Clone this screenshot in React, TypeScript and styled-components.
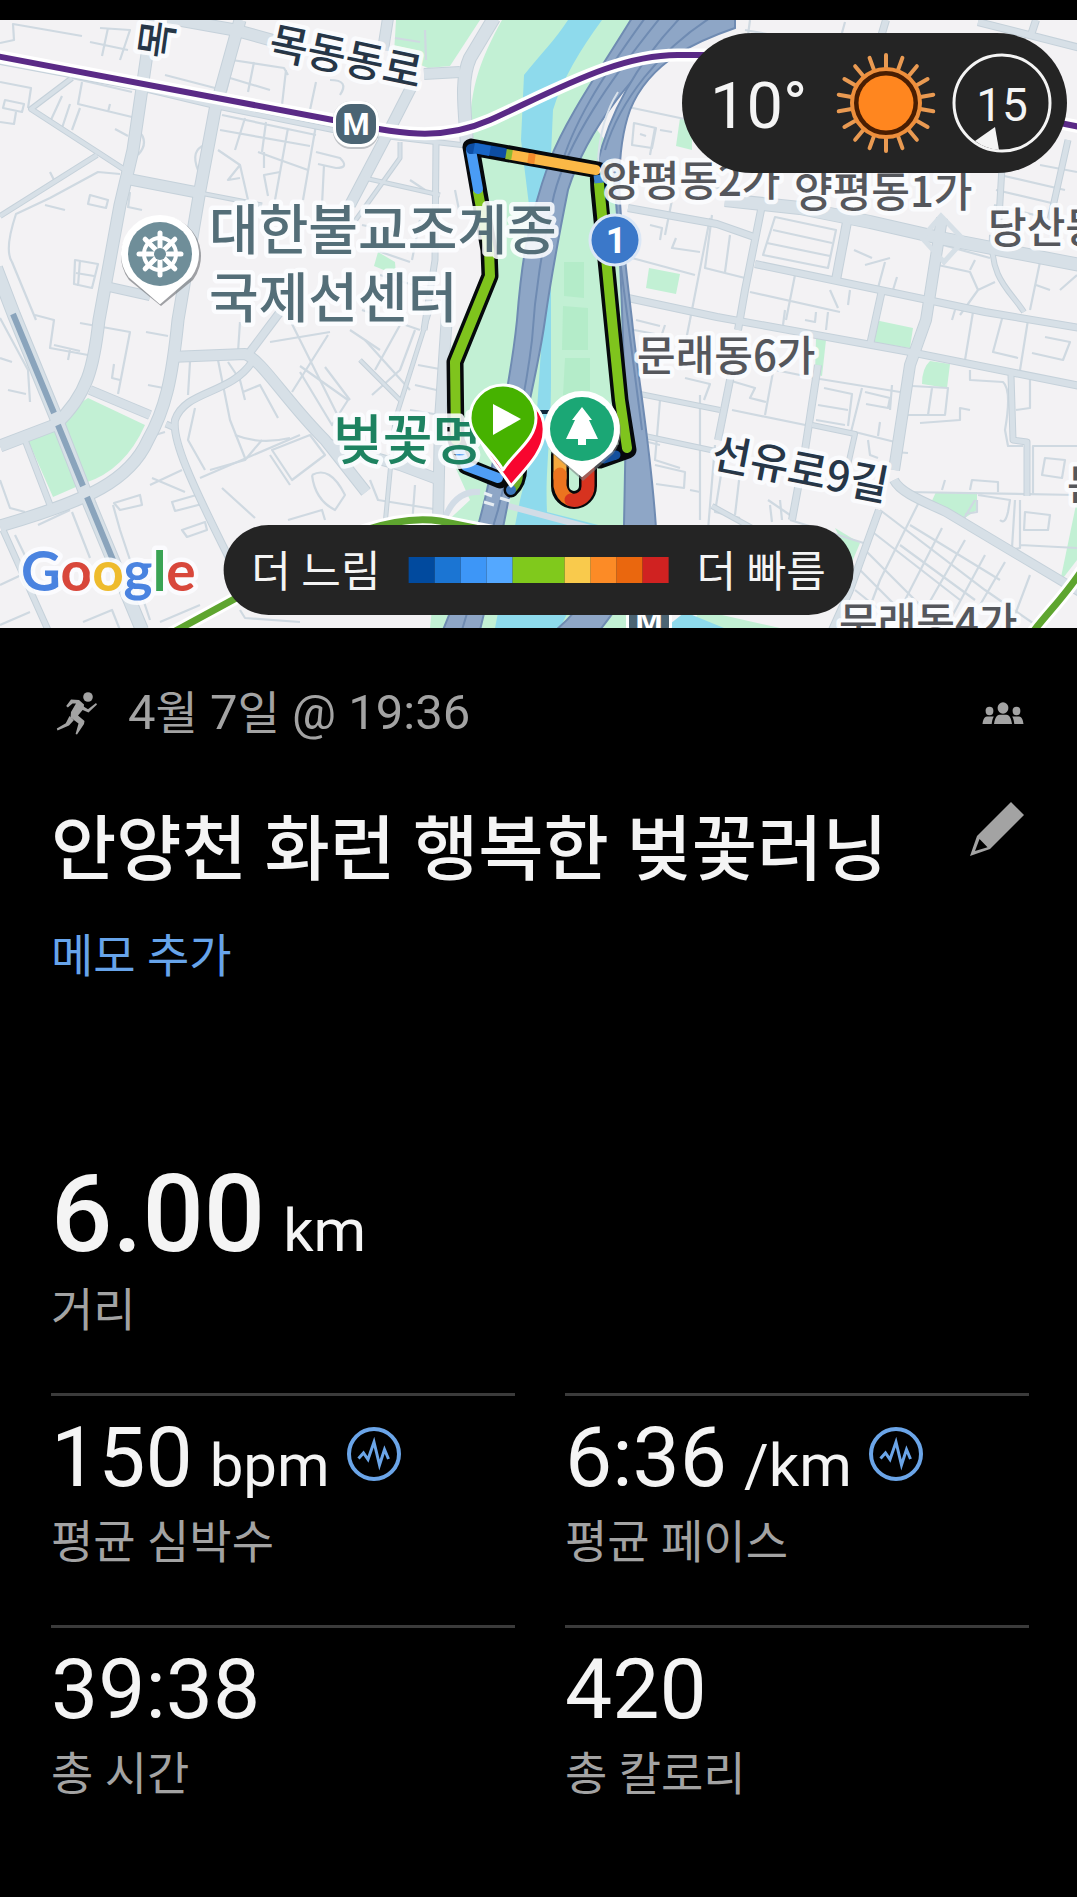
import React from "react";
import styled, { createGlobalStyle } from "styled-components";

const GlobalStyle = createGlobalStyle`
  * { box-sizing: border-box; }
  html, body { margin: 0; background: #000; }
  body {
    font-family: Roboto, "Noto Sans CJK KR", sans-serif;
    color: #f4f4f4;
  }
  button {
    margin: 0;
    padding: 0;
    border: 0;
    background: none;
    font: inherit;
    color: inherit;
    cursor: pointer;
  }
`;

const Page = styled.main`
  min-height: 100vh;
  padding-top: 20px;
  background: #000;
`;

/* ---------- map ---------- */

const MapPanel = styled.section`
  position: relative;
  overflow: hidden;
  background: #f3f2f4;
`;

const MapCanvas = styled.svg`
  display: block;
  width: 100%;
  height: auto;
`;

const WeatherPill = styled.div`
  position: absolute;
  top: 13px;
  right: 10px;
  width: 385px;
  height: 140px;
  padding: 0 15px 0 28px;
  display: flex;
  align-items: center;
  gap: 16px;
  border-radius: 70px;
  background: #242424;
`;

const Temperature = styled.span`
  flex: 1;
  padding-top: 6px;
  font-size: 65px;
  line-height: 72px;
`;

const LegendPill = styled.div`
  position: absolute;
  bottom: 13px;
  left: 50%;
  transform: translateX(-50%);
  height: 90px;
  padding: 0 28px;
  display: flex;
  align-items: center;
  gap: 28px;
  border-radius: 45px;
  background: #242424;
  white-space: nowrap;
`;

const LegendText = styled.span`
  padding-top: 4px;
  font-size: 43px;
  line-height: 56px;
`;

const LegendScale = styled.div`
  display: flex;
`;

const LegendStep = styled.span<{ $color: string; $span: number }>`
  width: ${(p) => p.$span * 26}px;
  height: 26px;
  background: ${(p) => p.$color};
`;

/* ---------- summary ---------- */

const Summary = styled.section`
  padding: 55px 48px 55px 51px;
`;

const MetaRow = styled.header`
  display: flex;
  align-items: center;
  padding: 0 5px;
  color: #a3a3a3;
`;

const ActivityDate = styled.time`
  flex: 1;
  margin-left: 30px;
  font-size: 49px;
  line-height: 60px;
`;

const Hangul = styled.span`
  font-size: 46px;
`;

const TitleRow = styled.div`
  display: flex;
  align-items: flex-start;
  justify-content: space-between;
  margin-top: 65px;
  padding-right: 5px;
`;

const Title = styled.h1`
  margin: 0;
  font-size: 71px;
  font-weight: 500;
  line-height: 84px;
`;

const EditButton = styled.button`
  display: flex;
  margin-top: -7px;
  color: #a3a3a3;
`;

const MemoButton = styled.button`
  display: block;
  margin-top: 36px;
  font-size: 46px;
  line-height: 56px;
  color: #67a4ea;
`;

const Hero = styled.div`
  margin-top: 170px;
`;

const HeroValue = styled.div`
  display: flex;
  align-items: baseline;
  gap: 18px;
  font-size: 108px;
  font-weight: 500;
  line-height: 120px;
`;

const StatGrid = styled.div`
  display: grid;
  grid-template-columns: 1fr 1fr;
  gap: 55px 50px;
  margin-top: 55px;
`;

const Stat = styled.div`
  padding-top: 14px;
  border-top: 3px solid #3b3b3b;
`;

const StatValue = styled.div`
  display: flex;
  align-items: baseline;
  gap: 17px;
  font-size: 84px;
  line-height: 96px;
`;

const Unit = styled.span`
  font-size: 60px;
  font-weight: 400;
  line-height: 60px;
`;

const Caption = styled.div`
  margin-top: 8px;
  font-size: 46px;
  line-height: 56px;
  color: #a3a3a3;
`;

const ChartButton = styled.button`
  display: flex;
  align-self: flex-start;
  margin-top: 17px;
`;

/* ---------- icons ---------- */

const RunnerIcon = () => (
  <svg width="42" height="43" viewBox="0 0 42 43" fill="currentColor" aria-hidden="true">
    <circle cx="32" cy="5" r="4.8" />
    <path d="M15 7.500 L23 8 L28 12.500 L27.500 17 L22 23.500 L28.500 29 L28 32 L21 42.500 L19.600 42 L22.500 31.500 L14.500 25.500 L15 20 L20 11.500 L16.500 11.500 L11.800 15.500 L10.200 14 Z" />
    <path d="M26 13.500 L32 17.300 L40 11 L41 12.600 L32.500 20.500 L25.500 17.500 Z" />
    <path d="M13.500 24 L17.800 28.200 L13 33.500 L1.500 38.500 L0.800 36.500 L9.800 31.200 Z" />
  </svg>
);

const GroupIcon = () => (
  <svg width="42" height="24" viewBox="0 0 42 24" fill="currentColor" role="img" aria-label="공개 범위">
    <ellipse cx="21" cy="7" rx="5.400" ry="5.800" />
    <path d="M12 23 C13 17 14.500 14 17.500 13.800 H24.500 C27.500 14 29 17 30 23 Z" />
    <ellipse cx="7.500" cy="10" rx="3.900" ry="4.200" />
    <path d="M0.500 23 C1 19 2 15.600 5 15.400 H11.800 C10.500 17.500 10 20 9.700 23 Z" />
    <ellipse cx="34.500" cy="10" rx="3.900" ry="4.200" />
    <path d="M41.500 23 C41 19 40 15.600 37 15.400 H30.200 C31.500 17.500 32 20 32.300 23 Z" />
  </svg>
);

const PencilIcon = () => (
  <svg width="54" height="55" viewBox="0 0 54 55" fill="currentColor" aria-hidden="true">
    <path fillRule="evenodd" d="M41 1 L54 14 L20 48 L0 55 L7 35 Z M9.500 38 L5 50 L17.500 46.200 Z" />
  </svg>
);

const ChartIcon = () => (
  <svg width="54" height="54" viewBox="0 0 54 54" fill="none" stroke="#6ba5e8" aria-hidden="true">
    <circle cx="27" cy="27" r="25" strokeWidth="4" />
    <path d="M11.500 31.500 L16.500 26 L21 32.500 L27 15 L32.500 38 L37.500 22.500 L41.500 32" strokeWidth="3" />
  </svg>
);

const SunIcon = () => (
  <svg width="100" height="100" viewBox="-50 -50 100 100" role="img" aria-label="맑음">
    {Array.from({ length: 18 }, (_, i) => (
      <line key={i} y1="-35" y2="-48" stroke="#e99a52" strokeWidth="4" strokeLinecap="round" transform={`rotate(${i * 20})`} />
    ))}
    <circle r="34" fill="#4a1e02" stroke="#ee8f3c" strokeWidth="4" />
    <circle r="27.500" fill="#ff861f" />
  </svg>
);

const WindIcon = () => (
  <svg width="100" height="100" viewBox="-50 -50 100 100" role="img" aria-label="바람 15">
    <circle r="48" fill="none" stroke="#f4f4f4" strokeWidth="3" />
    <path d="M-7 24 L-27 38 A47 47 0 0 0 -3 47 Z" fill="#f4f4f4" />
    <text y="18" fontSize="46" textAnchor="middle" fill="#f4f4f4">15</text>
  </svg>
);

/* ---------- map drawing ---------- */

const roads: { w: number; d: string }[] = [
  { w: 13, d: "M152 20 L133 150 L120 205 L99 320 C94 365 88 395 55 425 L0 446" },
  { w: 13, d: "M240 20 L215 110 L200 190 L178 320 C172 380 165 410 148 440 C130 480 90 500 0 526" },
  { w: 6, d: "M0 62 L140 88 L215 106 L333 130 L470 146" },
  { w: 13, d: "M168 18 L235 30 L300 48" },
  { w: 12, d: "M128 179 L200 193" },
  { w: 5, d: "M200 193 L262 205" },
  { w: 6, d: "M0 216 L97 155" },
  { w: 6, d: "M72 78 L31 109 L125 170" },
  { w: 10, d: "M105 286 L150 296" },
  { w: 14, d: "M-4 268 L14 315 L55 415 L90 505 L142 630" },
  { w: 7, d: "M25 440 L50 505 M3 530 L48 630" },
  { w: 10, d: "M90 390 L150 415" },
  { w: 12, d: "M170 357 L245 354 C262 360 285 400 325 440 L366 492" },
  { w: 9, d: "M250 352 L280 312" },
  { w: 8, d: "M252 362 C230 395 185 390 175 420 C172 440 190 480 228 556 L236 580" },
  { w: 7, d: "M166 424 L175 428" },
  { w: 14, d: "M494 18 L470 58 C460 80 465 110 467 146" },
  { w: 12, d: "M388 18 L383 50 M424 74 L460 72 M416 78 L392 125 L350 205" },
  { w: 7, d: "M436 142 L435 260 L424 330" },
  { w: 5, d: "M360 177 L440 195 M400 142 L400 158 L350 228" },
  { w: 12, d: "M330 445 L400 465 L440 480" },
  { w: 12, d: "M448 300 L440 420 L438 525" },
  { w: 5, d: "M430 310 L395 420 L385 525 M360 360 L400 400" },
  { w: 14, d: "M725 200 L800 208 L870 222 L940 238 L1080 265" },
  { w: 12, d: "M942 218 L926 320 L910 365 L894 470" },
  { w: 10, d: "M894 480 C900 492 920 500 946 512 L1080 592" },
  { w: 8, d: "M628 298 L717 317 L910 352 L1080 386" },
  { w: 8, d: "M762 205 L745 290 L738 330" },
  { w: 8, d: "M628 208 L717 224 L757 238" },
  { w: 10, d: "M847 222 L836 280" },
  { w: 8, d: "M755 264 L880 290 L985 312 L1080 328" },
  { w: 8, d: "M882 290 L870 345" },
  { w: 8, d: "M818 365 L805 450 L792 520" },
  { w: 8, d: "M732 370 L718 440" },
  { w: 6, d: "M812 425 L855 434 L848 465" },
  { w: 7, d: "M1011 375 L1013 440 L1027 442 L1027 496" },
  { w: 8, d: "M879 510 L850 590 L832 630" },
  { w: 6, d: "M992 235 C990 280 1010 290 1024 312" },
  { w: 8, d: "M1036 20 L1030 38 M978 22 L1080 48 M886 20 L880 40" },
  { w: 7, d: "M1003 150 L998 235 M1068 140 L1050 220" },
  { w: 6, d: "M635 393 L720 410 M640 435 L720 452 M712 506 L752 528" },
];

const lanes = [
  "M0 43 L14 40 L13 24 L82 36 M100 28 L130 30 L120 60 M90 42 L128 50 M108 28 L102 56",
  "M0 82 L31 88 L28 108 M5 100 L24 104 L22 112 L3 108 Z M0 122 L14 124 L16 112",
  "M72 78 L132 92 M82 82 L78 104 L132 117 M62 96 L50 122 M70 104 L62 128 M80 108 L72 130 M110 104 L108 112",
  "M138 130 Q150 142 138 155 M205 145 Q190 150 198 170 M50 172 L54 180 M115 129 L128 136",
  "M120 174 L98 172 L50 198 L16 214 Q4 250 12 262 L36 320 M90 195 L108 200 L106 208 L88 204 Z M45 205 L65 210",
  "M130 192 L128 208 M128 207 L142 210 M75 260 L98 264 L92 288 L74 284 Z M80 260 L78 286 M76 273 L94 276",
  "M165 75 L215 88 M232 60 L284 68 L288 75 M230 78 L270 90 M232 68 L226 92 M254 62 L248 92 M286 70 L282 105",
  "M222 115 L316 135 M220 130 L310 146 M245 118 L235 150 M266 122 L262 152 M288 128 L275 200 M316 125 L303 200",
  "M218 150 L240 165 L248 200 M258 152 L280 160 L308 170 M264 152 L264 168 M240 165 L228 180 L240 178 M268 196 L264 175 L280 172",
  "M316 152 L340 158 Q350 168 336 168 L318 164 M324 165 L322 205 M330 80 Q350 80 340 95 M316 82 L310 110",
  "M0 318 L28 370 L30 402 M0 358 L12 362 M8 390 L26 394 M35 315 L54 320 L50 348 L88 355 M54 345 L80 351 M70 350 L68 360",
  "M80 323 L130 332 L118 394 M114 364 L112 378 L120 380 M146 332 L168 336 M148 385 L174 390",
  "M190 362 L188 395 M218 360 L230 420 L245 458 M228 362 L240 380 L245 400 M243 392 L260 385 L278 418 M195 408 L188 440 L205 470",
  "M200 478 L300 435 M235 435 Q260 445 290 438 M240 322 L238 352 M270 342 L330 332 M290 320 L310 360 L340 420 M328 335 L292 392",
  "M300 366 L348 400 L332 425 L300 372 M325 367 L350 400 M350 330 L380 350 M270 455 L290 485 M222 488 L255 518 M210 470 L245 460 L262 440",
  "M272 450 L292 480 L325 455 L310 435 Z M312 475 Q330 465 345 495 L335 510 Q315 500 312 475",
  "M145 438 L165 432 M150 485 L182 470 M152 478 L185 492 M114 503 L140 495 L142 505 L120 510 Z M172 502 L200 494 L202 504 L175 511 Z M182 530 L205 522 L207 530 L187 537 Z",
  "M113 505 L120 530 L150 620 M15 535 L32 570 L0 585 M72 512 L90 558 M38 525 L70 510 M0 480 L10 508 L25 512 M0 625 L30 612",
  "M83 622 L112 610 L120 630 M160 622 L200 605 M240 610 L245 618 L300 622 M288 520 L322 510 L325 520 M245 540 L225 555",
  "M362 225 L395 232 M375 250 L410 262 M380 275 L430 290 M362 310 L420 330 M400 325 L375 370 M365 340 L410 390 M372 395 L400 370 L415 330",
  "M410 180 L425 190 M415 212 L436 218 M455 190 L460 215 M420 220 L412 260 M440 225 L455 228 M418 365 L445 370 M415 385 L445 392 M410 410 L440 415",
  "M395 38 L420 42 M425 30 L426 60 M370 480 L378 500 L440 510 M415 485 L412 525",
  "M628 107 L680 118 M634 123 L656 128 L652 148 L632 145 Z M640 134 L646 136 M660 130 L672 132 M655 128 L650 155",
  "M672 200 L665 235 M650 225 L662 228 L660 240 M710 218 L690 320 M628 232 L640 234 M632 258 L695 275 M676 238 L672 248 L700 252",
  "M636 320 L660 326 M634 330 L655 334 M690 320 L680 370 M665 325 L660 340 M685 378 L710 384 L704 400 M640 440 L660 445 M655 465 L685 472 L684 488 L656 484",
  "M690 490 L700 492 M636 370 L665 372 M700 395 L700 520 M715 445 L708 530 M660 400 L655 460 L680 468 M725 450 L715 512 L740 518 M742 455 L735 515",
  "M775 217 L836 230 L828 268 L763 255 Z M773 230 L832 243 M767 243 L830 256 M712 215 L705 268 L745 278 M730 235 L725 272",
  "M854 250 L872 258 M865 265 L890 258 M885 262 L878 288 M897 277 L893 290 M750 292 L840 312 M795 275 L786 320 M830 290 L838 308 M850 290 L848 305",
  "M943 245 L990 258 M938 265 L970 272 L978 290 L960 315 M978 290 L995 282 M970 270 L975 260 M1040 262 L1030 310 M1036 285 L1050 290 M1077 275 L1060 290",
  "M1000 175 L1065 190 M996 190 L1060 205 M994 205 L1055 220 M1020 155 L1018 170 M1040 165 L1077 172",
  "M785 310 L783 325 M828 312 L826 330 M805 320 L815 322 L816 312 M955 310 L952 320 M973 312 L965 360 M1003 315 L993 352 L1018 358 M1028 320 L1020 370",
  "M1045 337 L1070 342 L1063 360 L1032 353 M970 370 L970 380 L1003 382 Q1012 390 1005 430 L1008 446 L1023 446 M1030 380 L1030 408 L1016 410",
  "M760 367 L820 379 L900 392 M773 372 L765 415 M728 380 L755 388 L750 398 L766 402 M732 410 L820 428 M824 388 L852 394 L848 426 M818 405 L848 410 M816 420 L845 425",
  "M862 388 L850 436 M865 392 L890 398 L888 408 L866 404 M892 385 L890 410 M855 432 L895 442 M880 422 L878 436 M868 440 L870 455 L878 458",
  "M912 386 L948 388 L945 415 L905 415 M932 388 L928 415 M920 423 L960 420 L960 408 L970 410 M895 452 L908 453",
  "M905 492 L1077 495 M970 490 L972 480 L998 482 L998 492 M945 480 L942 490 M978 495 L1010 500 L1008 512 Q1005 525 1000 520 M1033 495 L1033 446 L1077 446 M1045 458 L1065 460 L1062 478 L1042 475 Z",
  "M1020 500 L1020 548 L1010 550 M1015 500 L1012 548 M1025 512 L1050 515 L1048 530 L1024 530 Z M1020 545 L1077 548 M960 525 L975 500 M977 500 L977 512 L965 514",
  "M880 510 L985 590 L1040 628 M870 530 L960 600 M865 550 L925 610 M860 570 L900 610 M855 590 L880 610 M920 500 L880 580 L868 612",
  "M942 528 L905 600 M965 540 L925 610 M985 555 L950 620 M1005 562 L980 605 M1030 575 L1010 628 M910 525 L1000 580 M900 545 L975 600",
  "M790 520 L870 545 M768 500 L790 515 M770 505 L772 522 M780 500 L782 520",
  "M745 30 L800 40 M750 20 L748 35 M680 118 L690 120 M690 180 L760 200 M845 22 L840 40",
];

const Halo = styled.text<{ $size: number; $color: string }>`
  font-family: "Noto Sans CJK KR", Roboto, sans-serif;
  font-size: ${(p) => p.$size}px;
  font-weight: 500;
  fill: ${(p) => p.$color};
  stroke: rgba(252, 253, 255, 0.88);
  stroke-width: 9px;
  stroke-linejoin: round;
  paint-order: stroke;
`;

const GoogleMark = styled.text`
  font-family: Lato, sans-serif;
  font-size: 55px;
  font-weight: 700;
  stroke: rgba(252, 253, 255, 0.85);
  stroke-width: 9px;
  stroke-linejoin: round;
  paint-order: stroke;
`;

const BadgeText = styled.text<{ $size: number }>`
  font-family: Roboto, sans-serif;
  font-size: ${(p) => p.$size}px;
  font-weight: 700;
  fill: #fff;
  text-anchor: middle;
`;

const GRAY = "#55575c";
const NAVY = "#263647";

const Station = ({ x, y }: { x: number; y: number }) => (
  <g transform={`translate(${x} ${y})`}>
    <rect x="-23" y="-23" width="46" height="48" rx="18" fill="#9da1a6" opacity="0.6" />
    <rect x="-23" y="-23" width="46" height="46" rx="18" fill="#fff" />
    <rect x="-20" y="-20" width="40" height="40" rx="15" fill="#4b6473" />
    <BadgeText $size={31} y="11">M</BadgeText>
  </g>
);

const dropPath = (r: number, tip: number) =>
  `M0 ${tip} L${-r * 0.8} ${r * 0.6} A${r} ${r} 0 1 1 ${r * 0.8} ${r * 0.6} Z`;

const RouteMap = () => (
  <MapCanvas viewBox="0 20 1077 608" role="img" aria-label="활동 경로 지도">
    <rect y="20" width="1077" height="608" fill="#f3f2f4" />

    {/* parks */}
    <g fill="#c2f0d4">
      <path d="M396 20 H480 L450 66 L428 68 L394 54 Z" />
      <path d="M502 20 H640 L590 120 L612 150 L640 470 L625 528 L640 628 H430 L440 528 L470 500 L452 460 L450 350 L488 260 L470 146 C468 90 480 60 502 20 Z" />
      <path d="M27 438 L88 398 L145 425 Q125 470 85 483 L53 497 Z" />
      <path d="M649 268 L680 274 L676 294 L646 288 Z" />
      <path d="M875 320 L913 328 L910 348 L872 342 Z" />
      <path d="M930 361 L950 364 L947 388 L922 384 Q922 368 930 361 Z" />
      <path d="M936 492 H977 V510 L960 521 L930 505 Z" />
      <path d="M1077 500 V560 L1060 582 Z" />
      <path d="M835 528 L860 543 L852 562 Z" />
      <path d="M680 118 L692 120 L692 150 L676 146 Z" />
      <path d="M816 338 L826 340 L822 376 L815 374 Z" />
      <path d="M378 252 L395 262 L396 275 L374 266 Z" />
      <path d="M700 610 L780 628 L690 628 Z" />
    </g>
    <g fill="#b4ecc9">
      <path d="M564 262 H584 V298 L564 296 Z M563 306 L588 308 V350 L562 350 Z M565 358 H590 V395 L563 395 Z" />
    </g>

    {/* river */}
    <path
      d="M568 20 H602 C580 50 562 80 553 110 L551 155 L535 230 L551 255 V380 C551 440 545 470 547 512 L610 528 L560 628 H495 L520 500 L535 440 L543 320 L528 197 L521 140 L524 75 C540 55 555 40 568 20 Z"
      fill="#8edaec"
    />
    <path d="M685 612 L724 628 H665 Z" fill="#8edaec" />

    {/* streets */}
    <g fill="none" stroke="#cfd9e1" strokeWidth="2.200" strokeLinejoin="round">
      {lanes.map((d) => (
        <path key={d} d={d} />
      ))}
    </g>
    <g fill="none" stroke="#c5d1da" strokeLinejoin="round">
      {roads.map((r) => (
        <path key={r.d} d={r.d} strokeWidth={r.w} />
      ))}
    </g>
    <g fill="none" stroke="#d7e0e7" strokeLinejoin="round">
      {roads.map((r) => (
        <path key={r.d} d={r.d} strokeWidth={r.w - 2} />
      ))}
    </g>
    <path d="M922 238 L941 216 L964 240 L944 262 Z" fill="none" stroke="#d7e0e7" strokeWidth="5" />
    <path d="M444 520 Q455 490 480 492 M505 505 L620 536" fill="none" stroke="#d2dce6" strokeWidth="6" />
    <path d="M13 314 L54 413 M58 425 L83 486 M87 497 L113 560" fill="none" stroke="#8aa4bc" strokeWidth="6" />

    {/* expressways */}
    <g stroke="#6f8bb2" strokeWidth="2" fill="#8ea6c6">
      <path d="M632 18 C600 70 565 120 550 160 C525 230 521 270 517 320 C512 370 500 430 487 490 C478 530 460 590 443 630 L480 630 C495 570 505 520 512 480 C525 420 538 370 545 320 C552 270 558 240 568 190 C590 120 640 70 690 18 Z" />
      <path d="M680 18 C640 60 610 110 597 165 L612 160 C622 250 622 330 626 420 L624 525 C605 575 580 610 556 630 L600 630 C630 590 655 560 656 528 C650 440 638 380 632 320 C620 220 612 160 630 110 C650 60 700 40 735 28 V18 Z" />
    </g>
    <g fill="none" stroke="#6f8bb2" strokeWidth="2">
      <path d="M660 18 C610 80 568 140 554 195 C542 250 535 290 532 340 C525 400 510 460 498 510 L462 630" />
      <path d="M645 18 C600 80 572 125 560 170 M710 18 C660 50 620 100 605 150 M620 260 L642 430" />
    </g>
    <path d="M484 493 L492 496 M494 505 L484 502 M500 498 L510 501" stroke="#e6edf3" strokeWidth="3" />
    <path d="M580 176 L598 162 Q600 120 618 92" fill="none" stroke="#d8e1ea" strokeWidth="2" />

    {/* metro lines */}
    <g fill="none">
      <path d="M-4 56 L333 120 C400 134 440 142 490 120 C560 88 620 54 680 55 H720 M1040 119 L1080 127" stroke="#fff" strokeWidth="13" />
      <path d="M-4 56 L333 120 C400 134 440 142 490 120 C560 88 620 54 680 55 H720 M1040 119 L1080 127" stroke="#5a2a86" strokeWidth="6" />
      <path d="M170 634 L260 585 C340 530 400 515 440 521 L510 535 M1030 636 C1045 615 1062 600 1082 570" stroke="#fff" strokeWidth="13" />
      <path d="M170 634 L260 585 C340 530 400 515 440 521 L510 535 M1030 636 C1045 615 1062 600 1082 570" stroke="#5ea52f" strokeWidth="7" />
    </g>

    {/* recorded route */}
    <g fill="none" strokeLinejoin="round" strokeLinecap="round">
      <path
        d="M500 480 L466 466 L456 440 L455 362 L490 276 L489 250 L471 147 L598 170 L599 190 L611 310 L620 400 L628 450 L600 460"
        stroke="#06090c"
        strokeWidth="17"
      />
      <path d="M560 455 V486 A14 14 0 0 0 588 486 V455" stroke="#06090c" strokeWidth="18" />
      <path d="M519 460 Q522 480 511 490" stroke="#06090c" strokeWidth="15" />
      <path d="M538 412 H560" stroke="#10253c" strokeWidth="4" />
      <path d="M456 440 L455 362 L490 276 L489 250 L478 192" stroke="#7fc41d" strokeWidth="10" />
      <path d="M599 184 L611 310 L620 400 L627 448" stroke="#7fc41d" strokeWidth="10" />
      <path d="M478 189 L471 150" stroke="#4a9cf5" strokeWidth="10" />
      <path d="M498 478 L466 466 L459 450" stroke="#4f9ef5" strokeWidth="10" />
      <path d="M471 149 L476 148 L504 153" stroke="#0d4da3" strokeWidth="10" />
      <path d="M512 155 L596 170" stroke="#fbb846" strokeWidth="10" />
      <g strokeLinecap="butt">
        <path d="M474 148 L490 151" stroke="#1866c6" strokeWidth="10" />
        <path d="M506 154 L512 155" stroke="#8cba33" strokeWidth="10" />
        <path d="M528 158 L535 159" stroke="#f58a2b" strokeWidth="10" />
        <path d="M598 175 L599 183" stroke="#3f83cc" strokeWidth="9" />
      </g>
      <path d="M616 455 L604 459" stroke="#14509d" strokeWidth="9" />
      <path d="M560 455 V478" stroke="#f5a93d" strokeWidth="13" />
      <path d="M560 474 V486 Q562 496 569 499" stroke="#ec741f" strokeWidth="13" />
      <path d="M571 500 A14 14 0 0 0 588 486 V460" stroke="#d7331f" strokeWidth="13" />
      <path d="M518 470 Q520 480 513 488" stroke="#6cae25" strokeWidth="9" />
      <circle cx="511" cy="490" r="5" fill="#3b76bb" stroke="none" />
    </g>

    {/* place names */}
    <Halo $size={41} $color={NAVY} transform="translate(169 60) rotate(-82)">목</Halo>
    <Halo $size={42} $color={NAVY} transform="translate(267 56) rotate(12)">목동동로</Halo>
    <Halo $size={54} $color="#546e78" x="209" y="250">대한불교조계종</Halo>
    <Halo $size={54} $color="#546e78" x="209" y="318">국제선센터</Halo>
    <Halo $size={42} $color={GRAY} x="602" y="196">양평동2가</Halo>
    <Halo $size={42} $color={GRAY} x="794" y="207">양평동1가</Halo>
    <Halo $size={42} $color={GRAY} x="988" y="243">당산동</Halo>
    <Halo $size={42} $color={GRAY} x="637" y="371">문래동6가</Halo>
    <Halo $size={42} $color={NAVY} transform="translate(710 467) rotate(11)">선유로9길</Halo>
    <Halo $size={42} $color={GRAY} x="839" y="638">문래동4가</Halo>
    <Halo $size={42} $color={GRAY} x="1067" y="500">문</Halo>
    <Halo $size={54} $color="#1d8260" x="333" y="460">벚꽃명</Halo>

    <Station x={356} y={124} />
    <Station x={649} y={621} />

    <circle cx="615" cy="240" r="25" fill="#3b78c9" stroke="#dbe7f6" strokeWidth="3" />
    <BadgeText $size={36} x="616" y="253">1</BadgeText>

    {/* temple pin */}
    <g transform="translate(160 254)">
      <path d={dropPath(40, 50)} transform="translate(1 2)" fill="#7b7e82" opacity="0.7" />
      <path d={dropPath(38, 49)} fill="#fff" stroke="#fff" strokeWidth="2" strokeLinejoin="round" />
      <circle r="32" fill="#6f8e99" />
      <g stroke="#fff" fill="none">
        <circle r="16" strokeWidth="4" />
        {Array.from({ length: 8 }, (_, i) => (
          <line key={i} y1="-6" y2="-21" strokeWidth="5" strokeLinecap="round" transform={`rotate(${i * 45})`} />
        ))}
      </g>
      <circle r="6" fill="#6f8e99" />
    </g>

    {/* finish and start pins */}
    <g stroke="#fff" strokeWidth="3" strokeLinejoin="round">
      <path d="M511 486 C500 468 478 448 478 426 A33 33 0 0 1 544 432 C544 452 524 470 511 486 Z" fill="#f8062f" />
      <path d="M503 470 C492 450 470 438 470 418 A33 33 0 0 1 536 418 C536 440 514 452 503 470 Z" fill="#46b200" />
    </g>
    <path d="M493 404 L521 419 L493 435 Z" fill="#fff" />

    {/* park pin */}
    <g transform="translate(582 429)">
      <path d={dropPath(38, 50)} transform="translate(1 2)" fill="#7b7e82" opacity="0.6" />
      <path d={dropPath(37, 47)} fill="#fff" stroke="#fff" strokeWidth="2" strokeLinejoin="round" />
      <circle r="32" fill="#1ba775" />
      <path d="M0 -22 L10 -9 H7 L16 10 H4 V16 H-4 V10 H-16 L-7 -9 H-10 Z" fill="#fff" />
    </g>

    <GoogleMark x="21" y="591">
      <tspan fill="#4a83e0">G</tspan>
      <tspan fill="#d8473b">o</tspan>
      <tspan fill="#eebb2d">o</tspan>
      <tspan fill="#4a83e0">g</tspan>
      <tspan fill="#3aa354">l</tspan>
      <tspan fill="#d8473b">e</tspan>
    </GoogleMark>
  </MapCanvas>
);

/* ---------- data ---------- */

const paceSteps = [
  { color: "#014a9e", span: 1 },
  { color: "#1b75d3", span: 1 },
  { color: "#3d96f7", span: 1 },
  { color: "#54a8ff", span: 1 },
  { color: "#80c91c", span: 2 },
  { color: "#f9ca4c", span: 1 },
  { color: "#fc8b26", span: 1 },
  { color: "#ea670e", span: 1 },
  { color: "#d02221", span: 1 },
];

const stats = [
  { value: "150", unit: "bpm", label: "평균 심박수", chart: true },
  { value: "6:36", unit: "/km", label: "평균 페이스", chart: true },
  { value: "39:38", label: "총 시간" },
  { value: "420", label: "총 칼로리" },
];

export default function App() {
  return (
    <>
      <GlobalStyle />
      <Page>
        <MapPanel>
          <RouteMap />
          <WeatherPill>
            <Temperature>10°</Temperature>
            <SunIcon />
            <WindIcon />
          </WeatherPill>
          <LegendPill>
            <LegendText>더 느림</LegendText>
            <LegendScale>
              {paceSteps.map((s) => (
                <LegendStep key={s.color} $color={s.color} $span={s.span} />
              ))}
            </LegendScale>
            <LegendText>더 빠름</LegendText>
          </LegendPill>
        </MapPanel>

        <Summary>
          <MetaRow>
            <RunnerIcon />
            <ActivityDate dateTime="04-07T19:36">
              4<Hangul>월</Hangul> 7<Hangul>일</Hangul> @ 19:36
            </ActivityDate>
            <GroupIcon />
          </MetaRow>
          <TitleRow>
            <Title>안양천 화런 행복한 벚꽃러닝</Title>
            <EditButton type="button" aria-label="제목 편집">
              <PencilIcon />
            </EditButton>
          </TitleRow>
          <MemoButton type="button">메모 추가</MemoButton>

          <Hero>
            <HeroValue>
              6.00<Unit>km</Unit>
            </HeroValue>
            <Caption>거리</Caption>
          </Hero>

          <StatGrid>
            {stats.map((s) => (
              <Stat key={s.label}>
                <StatValue>
                  {s.value}
                  {s.unit && <Unit>{s.unit}</Unit>}
                  {s.chart && (
                    <ChartButton type="button" aria-label={`${s.label} 그래프`}>
                      <ChartIcon />
                    </ChartButton>
                  )}
                </StatValue>
                <Caption>{s.label}</Caption>
              </Stat>
            ))}
          </StatGrid>
        </Summary>
      </Page>
    </>
  );
}
